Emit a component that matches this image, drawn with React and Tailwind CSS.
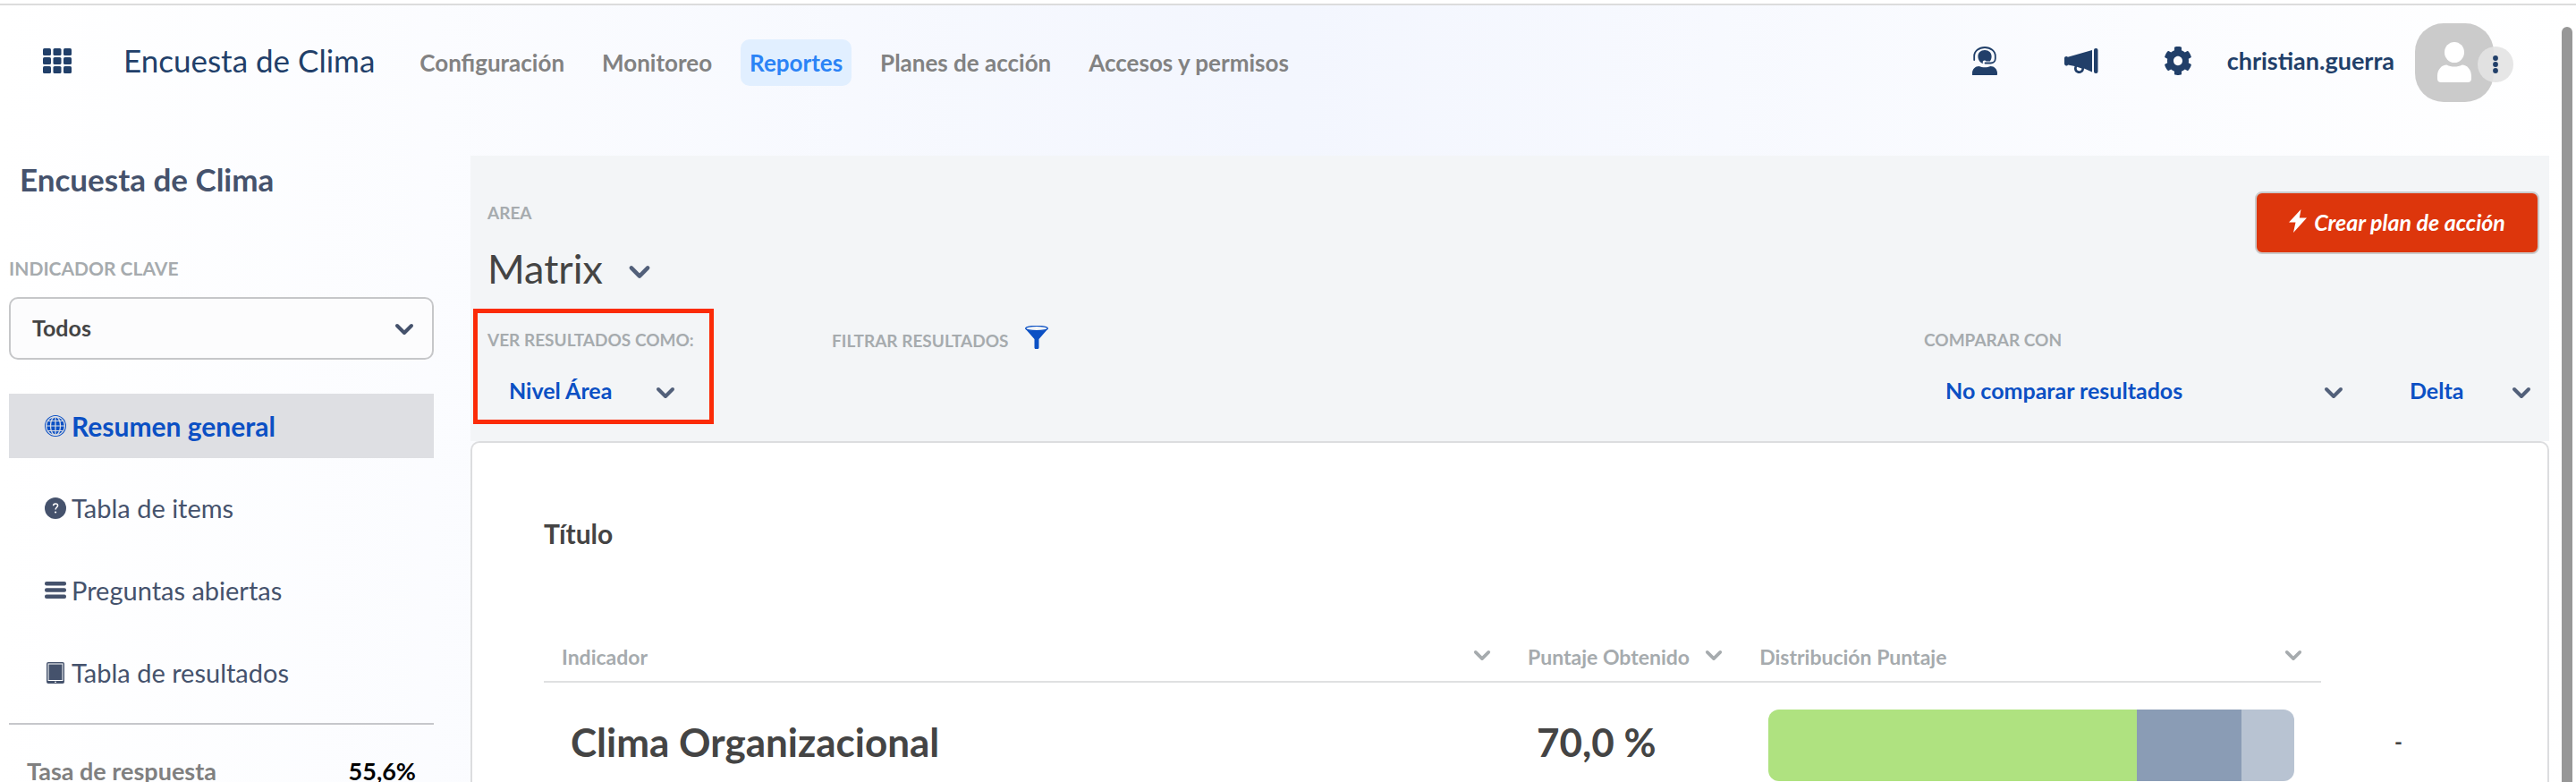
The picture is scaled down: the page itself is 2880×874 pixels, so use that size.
import React, { useState } from 'react';

const navLinks = ['Configuración', 'Monitoreo', 'Reportes', 'Planes de acción', 'Accesos y permisos'];

const Chevron = ({ className }) => (
  <svg viewBox="0 0 22 14" fill="none" stroke="currentColor" strokeWidth="4" strokeLinecap="round" strokeLinejoin="round" className={`pointer-events-none shrink-0 ${className}`}>
    <path d="M3 3l8 8 8-8" />
  </svg>
);

const GridIcon = () => (
  <svg viewBox="0 0 32 28" fill="currentColor" className="w-8 h-7">
    {[0, 10, 20].map((y) =>
      [0, 11.5, 23].map((x) => <rect key={`${x}-${y}`} x={x} y={y} width="9" height="8" rx="1.6" />)
    )}
  </svg>
);

const SupportIcon = () => (
  <svg viewBox="0 0 30 32" fill="currentColor" className="w-[30px] h-8">
    <path d="M15 4c4.6 0 7.6 3 7.6 7 0 2-.6 4-1.8 5.6h-4.200c-.4-.7-1-1-1.800-1-1.200 0-2.100.8-2.100 1.900 0 .7.300 1.200.7 1.600C9.800 18.200 7.400 14.800 7.400 11c0-4 3-7 7.600-7z" />
    <path d="M3.200 15v-4.200C3.200 5 8.400 1 15 1s11.800 4 11.800 9.800v2.700c0 3-2.200 5-5.200 5h-6.100" fill="none" stroke="currentColor" strokeWidth="1.800" strokeLinecap="round" />
    <path d="M1 32v-2.500C1 25.500 4.500 22 8.500 22c2 .9 4.200 1.300 6.500 1.300s4.500-.4 6.500-1.300c4 0 7.500 3.500 7.500 7.500V31c0 .6-.4 1-1 1z" />
  </svg>
);

const MegaphoneIcon = () => (
  <svg viewBox="0 0 38 28" fill="currentColor" className="w-[38px] h-7">
    <rect x="33" y="0" width="4.500" height="28" rx="2" />
    <path d="M31 2v24.500L22 22.500c0 3.200-2.400 5.500-5.500 5.500S11 25.700 11 22.500c0-.9.200-1.800.6-2.600L4 18.400C3.700 19 3 19.400 2.200 19.400 1 19.400 0 18.500 0 17.300v-6.500C0 9.700 1 8.900 2.200 8.900c.7 0 1.300.3 1.700.8zM14.200 20.700c-.3.500-.5 1.100-.5 1.800 0 1.600 1.200 2.800 2.800 2.800s2.900-1.300 2.900-2.900z" fillRule="evenodd" />
  </svg>
);

const GearIcon = () => (
  <svg viewBox="16 8 480 496" preserveAspectRatio="none" fill="currentColor" className="w-[30px] h-8">
    <path d="M487.400 315.700l-42.600-24.600c4.300-23.200 4.300-47 0-70.200l42.600-24.600c4.900-2.800 7.100-8.600 5.500-14-11.100-35.600-30-67.800-54.700-94.600-3.800-4.100-10-5.100-14.800-2.300L380.800 110c-17.900-15.400-38.500-27.300-60.800-35.100V25.800c0-5.600-3.900-10.500-9.400-11.700-36.700-8.200-74.300-7.800-109.200 0-5.500 1.200-9.400 6.100-9.400 11.700V75c-22.200 7.900-42.800 19.800-60.800 35.100L88.700 85.500c-4.900-2.800-11-1.900-14.800 2.300-24.700 26.700-43.600 58.900-54.700 94.600-1.700 5.400.6 11.200 5.500 14L67.300 221c-4.300 23.200-4.300 47 0 70.200l-42.600 24.600c-4.900 2.800-7.100 8.600-5.500 14 11.100 35.600 30 67.800 54.700 94.600 3.800 4.100 10 5.100 14.800 2.300l42.600-24.600c17.900 15.400 38.500 27.300 60.800 35.100v49.200c0 5.600 3.900 10.500 9.400 11.700 36.700 8.200 74.300 7.800 109.200 0 5.500-1.200 9.400-6.100 9.400-11.700v-49.200c22.200-7.900 42.800-19.800 60.800-35.100l42.600 24.600c4.900 2.800 11 1.900 14.800-2.300 24.700-26.700 43.600-58.900 54.700-94.600 1.500-5.500-.7-11.300-5.600-14.100zM256 336c-44.100 0-80-35.900-80-80s35.900-80 80-80 80 35.900 80 80-35.900 80-80 80z" />
  </svg>
);

const GlobeIcon = () => (
  <svg viewBox="0 0 24 24" className="w-6 h-6">
    <circle cx="12" cy="12" r="12" fill="currentColor" />
    <g fill="none" stroke="#dedfe3" strokeWidth="1.200">
      <circle cx="12" cy="12" r="10.400" />
      <ellipse cx="12" cy="12" rx="5.500" ry="10.400" />
      <path d="M12 1.500v21M1.500 12h21M3.500 6.500h17M3.500 17.500h17" />
    </g>
  </svg>
);

const QuestionIcon = () => (
  <svg viewBox="0 0 24 24" className="w-6 h-6">
    <circle cx="12" cy="12" r="12" fill="currentColor" />
    <path d="M9.600 9.300c0-1.500 1-2.400 2.500-2.400s2.500.9 2.500 2.200c0 1.900-2.500 2-2.500 4.300" fill="none" stroke="#fff" strokeWidth="1.500" />
    <circle cx="12.100" cy="16.500" r="1.100" fill="#fff" />
  </svg>
);

const LinesIcon = () => (
  <svg viewBox="0 0 24 24" fill="currentColor" className="w-6 h-6">
    <rect y="2" width="24" height="4.400" rx="2" />
    <rect y="9.300" width="24" height="4.400" rx="2" />
    <rect y="16.600" width="24" height="4.400" rx="2" />
  </svg>
);

const TabletIcon = () => (
  <svg viewBox="0 0 24 24" className="w-6 h-6">
    <rect x="2" width="20" height="24" rx="2" fill="currentColor" />
    <rect x="4" y="2" width="16" height="18.500" fill="none" stroke="#fff" strokeWidth="1" />
    <rect x="11" y="21.800" width="2" height="1" fill="#fff" />
  </svg>
);

const FunnelIcon = () => (
  <svg viewBox="0 0 26 26" className="w-[26px] h-[26px]">
    <path d="M0 3l10.500 12v9.500c0 .8.600 1.500 1.300 1.500h2.400c.7 0 1.300-.7 1.300-1.500V15L26 3z" fill="currentColor" />
    <ellipse cx="13" cy="3" rx="12.300" ry="2.700" fill="#f3f5f7" stroke="currentColor" strokeWidth="1.200" />
  </svg>
);

const menuItems = [
  { label: 'Resumen general', icon: GlobeIcon },
  { label: 'Tabla de items', icon: QuestionIcon },
  { label: 'Preguntas abiertas', icon: LinesIcon },
  { label: 'Tabla de resultados', icon: TabletIcon },
];

const distribution = [
  { value: 70, color: 'bg-[#afe280]' },
  { value: 20, color: 'bg-[#8a9cb5]' },
  { value: 10, color: 'bg-[#b8c3d2]' },
];

const BlueSelect = ({ id, label, option, className }) => (
  <div className={`relative flex items-center ${className}`}>
    <select id={id} aria-label={label} className="w-full h-8 appearance-none bg-transparent text-[25px] leading-8 font-bold text-[#0b50c4] outline-none">
      <option>{option}</option>
    </select>
    <Chevron className="absolute right-0 top-3 w-[22px] h-[14px] text-[#52607a]" />
  </div>
);

const Header = () => (
  <header className="flex items-center pt-5 pb-[60px] pl-12 pr-[92px] text-[#213f69]">
    <button aria-label="Aplicaciones" className="pb-1"><GridIcon /></button>
    <span className="ml-[58px] pb-[6px] text-[35px] leading-10">Encuesta de Clima</span>
    <nav className="ml-10 flex items-center gap-[22px]">
      {navLinks.map((link) => (
        <a
          key={link}
          href="#"
          className={`px-[10px] py-[10px] rounded-[10px] text-[26px] leading-8 font-bold ${
            link === 'Reportes' ? 'bg-[#e1efff] text-[#2b83f6]' : 'text-[#828282]'
          }`}
        >
          {link}
        </a>
      ))}
    </nav>

    <div className="ml-auto flex items-center">
      <button aria-label="Soporte" className="pb-1"><SupportIcon /></button>
      <button aria-label="Anuncios" className="ml-[74px] pb-1"><MegaphoneIcon /></button>
      <button aria-label="Ajustes" className="ml-[74px] pb-1"><GearIcon /></button>
      <span className="ml-10 pb-1 text-[27px] leading-8 font-bold">christian.guerra</span>
      <div className="relative ml-[23px]">
        <div className="w-[88px] h-[88px] rounded-[32px] bg-[#cbcbcb] flex items-center justify-center text-white">
          <svg viewBox="0 0 38 46" fill="currentColor" className="w-[38px] h-[46px]">
            <ellipse cx="19" cy="11.500" rx="11" ry="11.500" />
            <path d="M0 41v-3c0-7 4.500-12.500 10.500-12.500 2.500 1.400 5.400 2 8.500 2s6-.6 8.500-2C33.500 25.500 38 31 38 38v3c0 2.500-1.500 4-4 4H4c-2.500 0-4-1.500-4-4z" />
          </svg>
        </div>
        <button aria-label="Más opciones" className="absolute -right-[22px] top-[26px] w-10 h-10 rounded-full bg-[#e3e3e3]/90 flex items-center justify-center">
          <svg viewBox="0 0 6 20" fill="currentColor" className="w-[6px] h-5">
            <circle cx="3" cy="3" r="2.900" />
            <circle cx="3" cy="10" r="2.900" />
            <circle cx="3" cy="17" r="2.900" />
          </svg>
        </button>
      </div>
    </div>
  </header>
);

const Sidebar = ({ active, onSelect }) => (
  <aside className="w-[475px] shrink-0 pt-[6px]">
    <h1 className="pl-3 text-[35px] leading-10 font-bold text-[#45526c]">Encuesta de Clima</h1>
    <label htmlFor="indicador" className="block mt-[68px] text-[21px] leading-6 font-bold text-[#a6abae]">
      INDICADOR CLAVE
    </label>
    <div className="relative mt-5">
      <select id="indicador" className="w-full h-[70px] appearance-none rounded-[10px] border-2 border-[#c6c7c9] bg-[#fcfcfd] pl-6 text-[25px] font-bold text-[#444]">
        <option>Todos</option>
      </select>
      <Chevron className="absolute right-[22px] top-[29px] w-[22px] h-[14px] text-[#45526c]" />
    </div>
    <ul className="mt-[38px] flex flex-col gap-5">
      {menuItems.map(({ label, icon: Icon }) => (
        <li key={label}>
          <button
            onClick={() => onSelect(label)}
            className={`w-full h-[72px] pl-10 flex items-center gap-[6px] leading-8 ${
              active === label ? 'bg-[#dedfe3] text-[30px] font-bold text-[#0b50c4]' : 'text-[29px] text-[#45526c]'
            }`}
          >
            <Icon />
            {label}
          </button>
        </li>
      ))}
    </ul>
    <div className="mt-5 border-t-2 border-[#c6c7cb] pt-9 pl-5 pr-5 flex justify-between text-[27px] leading-8 font-bold">
      <span className="text-[#808080]">Tasa de respuesta</span>
      <span className="text-black">55,6%</span>
    </div>
  </aside>
);

const Filters = () => (
  <section className="bg-[#f3f5f7] pt-10 pb-[19px]">
    <div className="flex items-start justify-between pl-[19px] pr-[11px]">
      <div className="pt-3">
        <p className="text-[19px] leading-6 font-bold text-[#a6abae]">AREA</p>
        <button className="mt-[22px] flex items-center gap-7 text-[45px] leading-[56px] text-[#444]">
          Matrix
          <Chevron className="mt-2 w-[26px] h-4 text-[#52607a]" />
        </button>
      </div>
      <button className="flex items-center justify-center gap-2 w-[318px] h-[70px] rounded-lg border-2 border-[#cbcbcb] bg-[#dd360c] text-[25px] font-bold italic text-white">
        <svg viewBox="0 0 20 26" fill="currentColor" className="w-5 h-[26px] mb-1">
          <path d="M13.500 0L0 14.500h7.500L5 26 20 9.500h-8.200z" />
        </svg>
        Crear plan de acción
      </button>
    </div>

    <div className="mt-[17px] flex items-start pl-[3px] pr-5">
      <div className="w-[269px] border-[5px] border-[#fb2b07] pt-[18px] pb-[17px] pl-[11px]">
        <label htmlFor="nivel" className="block whitespace-nowrap text-[19px] leading-6 font-bold text-[#a6abae]">VER RESULTADOS COMO:</label>
        <BlueSelect id="nivel" option="Nivel Área" className="mt-7 ml-6 w-[186px]" />
      </div>
      <button className="ml-[132px] mt-[19px] flex items-center gap-[18px] text-[19px] leading-[30px] font-bold text-[#a6abae]">
        <span>FILTRAR RESULTADOS</span>
        <span className="pb-2 text-[#0b50c4]"><FunnelIcon /></span>
      </button>
      <div className="ml-auto mt-[23px]">
        <label htmlFor="comparar" className="block text-[19px] leading-6 font-bold text-[#a6abae]">COMPARAR CON</label>
        <div className="mt-7 ml-6 flex gap-[74px]">
          <BlueSelect id="comparar" option="No comparar resultados" className="w-[445px]" />
          <BlueSelect id="delta" label="Delta" option="Delta" className="w-[136px]" />
        </div>
      </div>
    </div>
  </section>
);

const Results = () => (
  <section className="flex-1 rounded-t-[10px] border-2 border-b-0 border-[#dcdddf] bg-white px-20 pt-[81px]">
    <h2 className="text-[30px] leading-10 font-bold text-[#444]">Título</h2>
    <table className="mt-[106px] w-full table-fixed border-separate border-spacing-0 text-left">
      <thead>
        <tr className="text-[23px] leading-6 font-bold text-[#a6abae]">
          <th className="w-[50%] border-b-2 border-[#dfe0e1] pb-[15px] pl-5 pr-[21px]">
            <div className="flex items-center justify-between">
              Indicador
              <Chevron className="mb-1 w-5 h-[13px]" />
            </div>
          </th>
          <th className="w-[12%] border-b-2 border-[#dfe0e1] pb-[15px] pl-5 pr-[21px]">
            <div className="flex items-center justify-between whitespace-nowrap">
              Puntaje Obtenido
              <Chevron className="mb-1 w-5 h-[13px]" />
            </div>
          </th>
          <th className="w-[30%] border-b-2 border-[#dfe0e1] pb-[15px] pl-5 pr-[21px]">
            <div className="flex items-center justify-between">
              Distribución Puntaje
              <Chevron className="mb-1 w-5 h-[13px]" />
            </div>
          </th>
          <th className="w-[8%]"></th>
        </tr>
      </thead>
      <tbody>
        <tr className="align-top text-[44px] leading-[72px] font-bold text-[#444]">
          <td className="pt-[30px] pl-[30px]">Clima Organizacional</td>
          <td className="pt-[30px] pl-[30px]">70,0 %</td>
          <td className="pt-[30px] pl-[30px] pr-[30px]">
            <div className="flex h-20 overflow-hidden rounded-xl">
              {distribution.map((part) => (
                <div key={part.color} className={part.color} style={{ width: `${part.value}%` }} />
              ))}
            </div>
          </td>
          <td className="pt-[30px] text-center text-2xl leading-[72px] font-bold">-</td>
        </tr>
      </tbody>
    </table>
  </section>
);

const App = () => {
  const [active, setActive] = useState('Resumen general');

  return (
    <div className="relative h-screen overflow-hidden bg-white pt-1 font-['Lato','Open_Sans',sans-serif]">
      <div className="flex h-full flex-col border-t-2 border-[#dcdcdc] bg-linear-to-r from-white via-[#f3f6fe] to-white">
        <Header />
        <div className="flex flex-1 gap-[41px] pl-[10px] pr-[30px]">
          <Sidebar active={active} onSelect={setActive} />
          <main className="flex flex-1 flex-col">
            <Filters />
            <Results />
          </main>
        </div>
      </div>
      {/* Scrollbar thumb */}
      <div className="absolute right-1 top-[30px] bottom-0 w-3 rounded-t-full bg-[#979797]" />
    </div>
  );
};

export default App;
